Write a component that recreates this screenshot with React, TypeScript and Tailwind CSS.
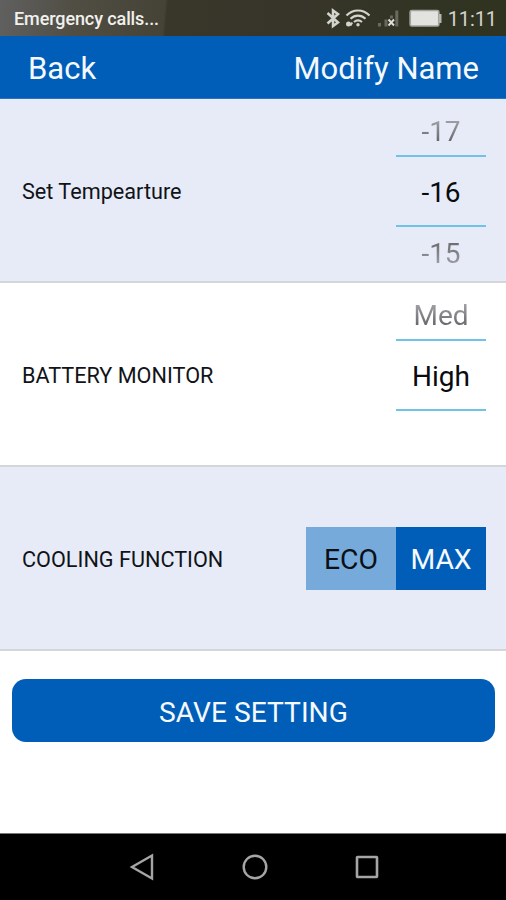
import type { ReactNode } from "react";

function StatusBar() {
  return (
    <div className="flex h-9 shrink-0 items-center justify-between bg-[linear-gradient(95deg,#606060_0%,#504d43_15%,#454336_32.500%,#393729_33%,#37352a_55%,#2f331f_100%)] pl-[14px] pr-[9px]">
      <span className="whitespace-nowrap pt-[2px] text-[18px] font-medium leading-[18px] tracking-[-0.1px] text-[#f1f1ee]">Emergency calls...</span>
      <svg width="118" height="24" viewBox="326 6 118 24" className="ml-auto mr-[4px] shrink-0" fill="none">
        <path d="M327.500 13L338 22.500L333 26V10.500L338 14L327.500 23.500" stroke="#d4d4cf" strokeWidth="2.500" />
        <path d="M346.500 15.500C353 8.800 363 8.800 369.500 15.500M350.500 18.800C355 14.700 361 14.700 365.500 18.800M354 22C356.500 19.900 359.500 19.900 362 22" stroke="#d4d4cf" strokeWidth="2.200" />
        <circle cx="358" cy="24.800" r="1.700" fill="#d4d4cf" />
        <circle cx="348.500" cy="24" r="2.500" fill="#d4d4cf" />
        <path d="M352.300 22.500L350.500 25.500" stroke="#d4d4cf" strokeWidth="1.800" />
        <path d="M378 23h3v3.500h-3zM384.500 19.500h3v7h-3zM395.300 10.500h3v16h-3zM390 15.500h3v3h-3z" fill="#69695e" />
        <path d="M388.500 19.500L394 25.500M394 19.500L388.500 25.500" stroke="#dededb" strokeWidth="1.900" />
        <rect x="410.200" y="10.500" width="28.600" height="15.500" rx="1.500" fill="#e2e2df" stroke="#a5a59f" strokeWidth="1.700" />
        <path d="M439 14h2.500v9H439z" fill="#b6b6b0" />
      </svg>
      <span className="pt-[2px] text-[20px] leading-5 tracking-[-0.1px] text-[#d4d4cf]">11:11</span>
    </div>
  );
}

function Row({ label, shaded = false, children }: { label: string; shaded?: boolean; children: ReactNode }) {
  return (
    <section className={`flex h-[184px] shrink-0 justify-between border-b-2 border-[#d5d6da] pl-[22px] pr-5 ${shaded ? "bg-[#e6ebf7]" : "bg-white"}`}>
      <span className="self-center pt-[3px] text-[21.65px] leading-[26px] text-[#111318]">{label}</span>
      {children}
    </section>
  );
}

function Picker({ previous, value, next }: { previous: string; value: string; next?: string }) {
  return (
    <div className="flex w-[90px] flex-col text-center text-[28px] leading-8">
      <div className="h-14 bg-linear-to-b from-[#a4a5aa] from-35% to-[#626367] to-80% bg-clip-text pt-[17px] text-transparent">{previous}</div>
      <div className="h-[72px] border-y-2 border-[#6fc3e6] pt-[20px] text-[#090b0f]">{value}</div>
      <div className="h-[54px] bg-linear-to-b from-[#626367] from-20% to-[#a4a5aa] to-75% bg-clip-text pt-[11px] text-transparent">{next}</div>
    </div>
  );
}

export default function App() {
  return (
    <main className="flex h-[900px] w-[506px] flex-col overflow-hidden bg-white font-[Roboto,sans-serif]">
      <StatusBar />
      <header className="flex h-[63px] shrink-0 items-center justify-between border-b border-[#2c73bd] bg-[#005eb8] pl-[28px] pr-[27px] pt-[4px] text-[31px] leading-9 text-[#f5f8fc]">
        <button>Back</button>
        <button>Modify Name</button>
      </header>
      <Row label="Set Tempearture" shaded>
        <Picker previous="-17" value="-16" next="-15" />
      </Row>
      <Row label="BATTERY MONITOR">
        <Picker previous="Med" value="High" />
      </Row>
      <Row label="COOLING FUNCTION" shaded>
        <div className="flex h-[63px] w-[180px] self-center text-[28.3px]">
          <button className="flex-1 bg-[#76aadb] pt-[4px] text-[#0b1017]">ECO</button>
          <button className="flex-1 bg-[#005eb8] pt-[4px] text-[#f7faff]">MAX</button>
        </div>
      </Row>
      <div className="flex-1 pl-3 pr-[11px] pt-[28px]">
        <button className="h-[63px] w-full rounded-[14px] bg-[#005eb8] pt-[5px] text-[28.2px] text-[#f5f8fc]">SAVE SETTING</button>
      </div>
      <nav className="flex h-[67px] shrink-0 items-center justify-center gap-[84.500px] border-t border-[#777] bg-black pl-[3px]">
        <svg width="28" height="28" viewBox="0 0 28 28" fill="none" stroke="#a5a5a5" strokeWidth="2.400"><path d="M24 2.500V25.500L4 14Z" /></svg>
        <svg width="28" height="28" viewBox="0 0 28 28" fill="none" stroke="#a5a5a5" strokeWidth="2.400"><circle cx="14" cy="14" r="11.300" /></svg>
        <svg width="28" height="28" viewBox="0 0 28 28" fill="none" stroke="#a5a5a5" strokeWidth="2.600"><rect x="4" y="4" width="20" height="20" rx="0.500" /></svg>
      </nav>
    </main>
  );
}
